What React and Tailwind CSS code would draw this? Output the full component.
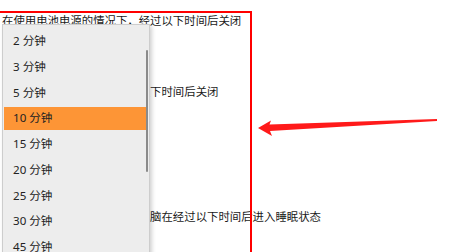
import React from "react";

const options = ["2 分钟", "3 分钟", "5 分钟", "10 分钟", "15 分钟", "20 分钟", "25 分钟", "30 分钟", "45 分钟"];

export default function App() {
  return (
    <div
      className="relative w-[450px] h-[252px] overflow-hidden bg-white text-[#1a1a1a]"
      style={{ fontFamily: '"Noto Sans", "Noto Sans CJK SC", sans-serif' }}
    >
      {/* page text */}
      <div className="flex flex-col pl-[2px] pt-[13px] text-[11.4px] leading-[16px] whitespace-nowrap">
        <p>在使用电池电源的情况下，经过以下时间后关闭</p>
        <p className="mt-[55px]">在接通电源的情况下，经过以下时间后关闭</p>
        <p className="mt-[109px]">在使用电池电源的情况下，电脑在经过以下时间后进入睡眠状态</p>
      </div>

      {/* red annotation box */}
      <div className="absolute left-[-10px] top-[11px] w-[262px] h-[260px] border-2 border-[#ff0000]" />

      {/* open dropdown */}
      <div className="absolute left-[2px] top-[24px] w-[148px] h-[240px] bg-[#ededed] border border-[#cdcdcd] shadow-[2px_2px_4px_rgba(0,0,0,0.18)]">
        <ul className="flex flex-col pt-[3px] px-[1px] text-[11.6px] text-[#222]">
          {options.map((o) => (
            <li key={o} className="h-[25.75px] py-[1.4px]">
              <div
                className={`h-full flex items-center pl-[9px] ${
                  o === "10 分钟" ? "bg-[#fd9536]" : ""
                }`}
              >
                {o}
              </div>
            </li>
          ))}
        </ul>
        <div className="absolute left-[143px] top-[25px] w-[2px] h-[122px] bg-[#8a8a8a] rounded-full" />
      </div>

      {/* arrow */}
      <svg className="absolute left-0 top-0" width="450" height="252" viewBox="0 0 450 252">
        <polygon
          points="258,128 271,120.5 269.5,124.5 437,119 437,121 270,131 272,136"
          fill="#ff1a1a"
        />
      </svg>
    </div>
  );
}
